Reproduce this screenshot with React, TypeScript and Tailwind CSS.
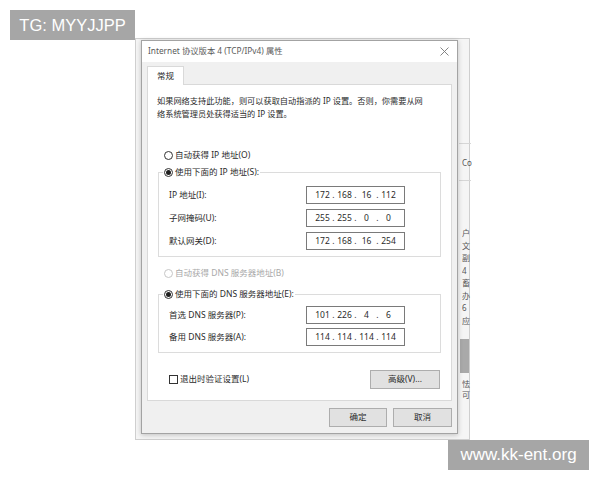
import React from "react";

const Radio = ({ checked, disabled }: { checked?: boolean; disabled?: boolean }) => (
  <span
    className={`flex h-[9px] w-[9px] shrink-0 items-center justify-center rounded-full border bg-white ${
      disabled ? "border-[#c6c6c6]" : "border-[#333333]"
    }`}
  >
    {checked && <span className="h-[5px] w-[5px] rounded-full bg-[#1f1f1f]" />}
  </span>
);

const IpField = ({ parts }: { parts: string[] }) => (
  <div className="flex h-[18px] w-[99px] items-center justify-center border border-[#7a7a7a] bg-white text-[8.5px] text-[#2b2b2b]">
    {parts.map((p, i) => (
      <span key={i} className="flex items-center">
        {i > 0 && <span className="w-[5px] text-center">.</span>}
        <span className="w-[17px] text-center">{p}</span>
      </span>
    ))}
  </div>
);

const Row = ({ label, parts }: { label: string; parts: string[] }) => (
  <div className="flex items-center justify-between pl-[10px] pr-[35px]">
    <span>{label}</span>
    <IpField parts={parts} />
  </div>
);

const Button = ({ children, w }: { children: React.ReactNode; w: string }) => (
  <div
    className={`flex h-[19px] items-center justify-center border border-[#adadad] bg-[#e1e1e1] text-[8.5px] text-[#2b2b2b] ${w}`}
  >
    {children}
  </div>
);

export default function App() {
  return (
    <div className="relative h-[480px] w-[600px] overflow-hidden bg-white font-['Noto_Sans','Noto_Sans_CJK_SC',sans-serif] text-[8.5px] text-[#2b2b2b]">
      {/* window behind the dialog */}
      <div className="absolute left-[135px] top-[38px] h-[402px] w-[335px] border border-[#cfcfcf] bg-[#f5f5f5]">
        <div className="absolute left-[323px] top-[104px] h-px w-[12px] bg-[#d6d6d6]" />
        <div className="absolute left-[323px] top-[141px] h-px w-[12px] bg-[#d6d6d6]" />
        <div className="absolute left-[326px] top-[118px] w-[10px] overflow-hidden whitespace-nowrap text-[8px] text-[#555555]">Co</div>
        <div className="absolute left-[326px] top-[188px] flex w-[9px] flex-col overflow-hidden text-[8px] leading-[12.5px] text-[#555555]">
          <span>户</span>
          <span>文</span>
          <span>副</span>
          <span>4</span>
          <span>畜</span>
          <span>办</span>
          <span>6</span>
          <span>应</span>
        </div>
        <div className="absolute left-[324px] top-[300px] h-[34px] w-[9px] bg-[#a9a9a9]" />
        <div className="absolute left-[326px] top-[339px] flex w-[9px] flex-col overflow-hidden text-[8px] leading-[11px] text-[#555555]">
          <span>怯</span>
          <span>可</span>
        </div>
      </div>

      {/* dialog */}
      <div className="absolute left-[141px] top-[40px] flex w-[317px] flex-col border border-[#a3a3a3] bg-[#f0f0f0] shadow-[0_1px_5px_rgba(0,0,0,0.22)]">
        <div className="flex h-[21px] items-center justify-between bg-white pl-[6px] pr-[8px] text-[8.3px] text-[#5a5a5a]">
          <span>Internet 协议版本 4 (TCP/IPv4) 属性</span>
          <svg width="9" height="9" viewBox="0 0 9 9" fill="none" stroke="#777777" strokeWidth="0.9">
            <path d="M0.5 0.5 L8.5 8.5 M8.5 0.5 L0.5 8.5" />
          </svg>
        </div>

        <div className="flex flex-col px-[5px] pb-[6px] pt-[4px]">
          <div className="relative z-10 -mb-px flex h-[19px] w-[37px] items-center justify-center border border-b-0 border-[#d9d9d9] bg-white">
            常规
          </div>

          <div className="flex h-[317px] flex-col border border-[#d9d9d9] bg-white px-[10px] pt-[9px]">
            <p className="-ml-px whitespace-nowrap text-[8.2px] leading-[13px]">
              如果网络支持此功能，则可以获取自动指派的 IP 设置。否则，你需要从网
              <br />
              络系统管理员处获得适当的 IP 设置。
            </p>

            <div className="ml-[6px] mt-[29px] flex h-[12px] items-center gap-[2px]">
              <Radio />
              <span>自动获得 IP 地址(O)</span>
            </div>

            <fieldset className="mt-[5px] border border-[#dcdcdc] pb-[6px]">
              <legend className="ml-[4px] flex h-[12px] items-center gap-[2px] px-[1px]">
                <Radio checked />
                <span>使用下面的 IP 地址(S):</span>
              </legend>
              <div className="flex flex-col gap-[5px] pt-[8px]">
                <Row label="IP 地址(I):" parts={["172", "168", "16", "112"]} />
                <Row label="子网掩码(U):" parts={["255", "255", "0", "0"]} />
                <Row label="默认网关(D):" parts={["172", "168", "16", "254"]} />
              </div>
            </fieldset>

            <div className="ml-[6px] mt-[10px] flex h-[12px] items-center gap-[2px] text-[#a8a8a8]">
              <Radio disabled />
              <span>自动获得 DNS 服务器地址(B)</span>
            </div>

            <fieldset className="mt-[9px] border border-[#dcdcdc] pb-[6px]">
              <legend className="ml-[4px] flex h-[12px] items-center gap-[2px] px-[1px]">
                <Radio checked />
                <span>使用下面的 DNS 服务器地址(E):</span>
              </legend>
              <div className="flex flex-col gap-[4px] pt-[6px]">
                <Row label="首选 DNS 服务器(P):" parts={["101", "226", "4", "6"]} />
                <Row label="备用 DNS 服务器(A):" parts={["114", "114", "114", "114"]} />
              </div>
            </fieldset>

            <div className="mt-[17px] flex items-center justify-between pl-[11px] pr-px">
              <div className="flex items-center gap-[2px]">
                <span className="h-[9px] w-[9px] border border-[#333333] bg-white" />
                <span>退出时验证设置(L)</span>
              </div>
              <Button w="w-[70px]">高级(V)...</Button>
            </div>
          </div>

          <div className="mt-[7px] flex justify-end gap-[6px]">
            <Button w="w-[58px]">确定</Button>
            <Button w="w-[59px]">取消</Button>
          </div>
        </div>
      </div>

      {/* watermarks */}
      <div className="absolute left-[10px] top-[10px] flex h-[30px] w-[125px] items-center justify-center bg-[#a6a6a6] font-['Liberation_Sans',sans-serif] text-[16.5px] text-white">
        TG: MYYJJPP
      </div>
      <div className="absolute left-[448px] top-[440px] flex h-[30px] w-[141px] items-center justify-center bg-[#a6a6a6] font-['Liberation_Sans',sans-serif] text-[17px] text-white">
        www.kk-ent.org
      </div>
    </div>
  );
}
